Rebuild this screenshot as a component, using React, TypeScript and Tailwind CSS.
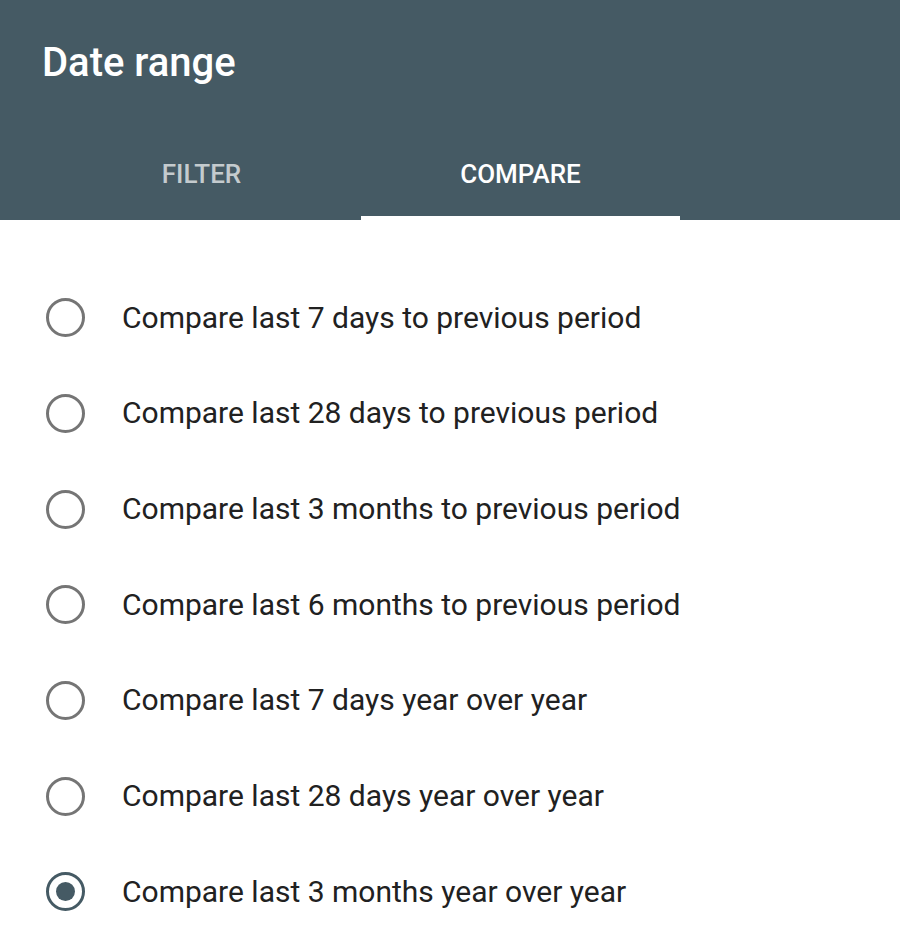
import { useState } from "react";

const options = [
  "Compare last 7 days to previous period",
  "Compare last 28 days to previous period",
  "Compare last 3 months to previous period",
  "Compare last 6 months to previous period",
  "Compare last 7 days year over year",
  "Compare last 28 days year over year",
  "Compare last 3 months year over year",
];

export default function App() {
  const [tab, setTab] = useState("compare");
  const [selected, setSelected] = useState(6);

  return (
    <div className="w-[900px] h-[948px] bg-white overflow-hidden font-['Roboto',sans-serif]">
      {/* Header */}
      <div className="h-[220px] bg-[#455a64] pl-[42px]">
        <h1 className="pt-[39px] text-[40px] leading-[48px] font-medium text-white">Date range</h1>
        <div className="mt-[37px] flex h-[96px]">
          {[
            { id: "filter", label: "FILTER" },
            { id: "compare", label: "COMPARE" },
          ].map((t) => (
            <button
              key={t.id}
              onClick={() => setTab(t.id)}
              className={`relative w-[319px] h-full flex items-center justify-center pt-[4px] text-[26px] leading-[32px] font-medium ${
                tab === t.id ? "text-white" : "text-white/70"
              }`}
            >
              {t.label}
              {tab === t.id && <span className="absolute left-0 right-0 bottom-0 h-[4px] bg-white" />}
            </button>
          ))}
        </div>
      </div>

      {/* Options */}
      <div className="pt-[50px]">
        {options.map((label, i) => (
          <label key={label} className="flex items-center h-[95.67px] cursor-pointer" onClick={() => setSelected(i)}>
            <span
              className={`ml-[46px] w-[39px] h-[39px] rounded-full border-[3.5px] flex items-center justify-center ${
                selected === i ? "border-[#455a64]" : "border-[#757575]"
              }`}
            >
              {selected === i && <span className="w-[19px] h-[19px] rounded-full bg-[#455a64]" />}
            </span>
            <span className="ml-[37px] text-[30px] leading-[34px] text-[#212121]">{label}</span>
          </label>
        ))}
      </div>
    </div>
  );
}
